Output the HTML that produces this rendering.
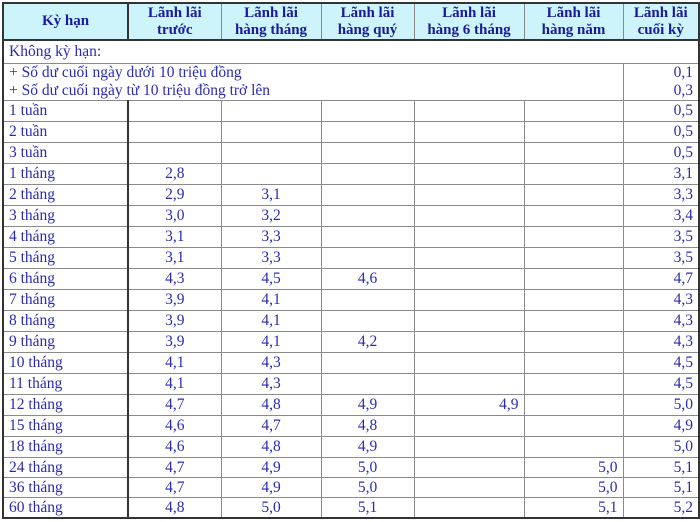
<!DOCTYPE html>
<html><head><meta charset="utf-8"><style>
body{margin:0;width:700px;height:522px;background:#fff;overflow:hidden}
table{position:absolute;left:2px;top:2px;border-collapse:collapse;table-layout:fixed;font-family:"Liberation Serif",serif;font-size:15.5px;color:#2b2bb0;border:2px solid #333}
td{border:1px solid #8a8a8a;padding:0 5px;height:20px;line-height:18px;white-space:nowrap;overflow:visible}
td:first-child{border-right:2px solid #333}
.h td{background:#cdf4fb;font-weight:bold;color:#1a1a9a;text-align:center;height:35px;line-height:17px;border-bottom:2px solid #333;font-size:15px}
.c{text-align:center}.r{text-align:right}
tr.s td{height:19px}
</style></head><body>
<table>
<colgroup><col style="width:125px"><col style="width:93px"><col style="width:100px"><col style="width:93px"><col style="width:110px"><col style="width:99px"><col style="width:76px"></colgroup>
<tr class="h"><td>Kỳ hạn</td><td>Lãnh lãi<br>trước</td><td>Lãnh lãi<br>hàng tháng</td><td>Lãnh lãi<br>hàng quý</td><td>Lãnh lãi<br>hàng 6 tháng</td><td>Lãnh lãi<br>hàng năm</td><td>Lãnh lãi<br>cuối kỳ</td></tr>
<tr><td colspan="7" style="height:22px;border-right:none">Không kỳ hạn:</td></tr>
<tr><td colspan="6" style="height:36px;border-right:1px solid #8a8a8a">+ Số dư cuối ngày dưới 10 triệu đồng<br>+ Số dư cuối ngày từ 10 triệu đồng trở lên</td><td class="r">0,1<br>0,3</td></tr>
<tr><td>1 tuần</td><td></td><td></td><td></td><td></td><td></td><td class="r">0,5</td></tr>
<tr><td>2 tuần</td><td></td><td></td><td></td><td></td><td></td><td class="r">0,5</td></tr>
<tr><td>3 tuần</td><td></td><td></td><td></td><td></td><td></td><td class="r">0,5</td></tr>
<tr><td>1 tháng</td><td class="c">2,8</td><td></td><td></td><td></td><td></td><td class="r">3,1</td></tr>
<tr><td>2 tháng</td><td class="c">2,9</td><td class="c">3,1</td><td></td><td></td><td></td><td class="r">3,3</td></tr>
<tr><td>3 tháng</td><td class="c">3,0</td><td class="c">3,2</td><td></td><td></td><td></td><td class="r">3,4</td></tr>
<tr><td>4 tháng</td><td class="c">3,1</td><td class="c">3,3</td><td></td><td></td><td></td><td class="r">3,5</td></tr>
<tr><td>5 tháng</td><td class="c">3,1</td><td class="c">3,3</td><td></td><td></td><td></td><td class="r">3,5</td></tr>
<tr><td>6 tháng</td><td class="c">4,3</td><td class="c">4,5</td><td class="c">4,6</td><td></td><td></td><td class="r">4,7</td></tr>
<tr><td>7 tháng</td><td class="c">3,9</td><td class="c">4,1</td><td></td><td></td><td></td><td class="r">4,3</td></tr>
<tr><td>8 tháng</td><td class="c">3,9</td><td class="c">4,1</td><td></td><td></td><td></td><td class="r">4,3</td></tr>
<tr><td>9 tháng</td><td class="c">3,9</td><td class="c">4,1</td><td class="c">4,2</td><td></td><td></td><td class="r">4,3</td></tr>
<tr><td>10 tháng</td><td class="c">4,1</td><td class="c">4,3</td><td></td><td></td><td></td><td class="r">4,5</td></tr>
<tr><td>11 tháng</td><td class="c">4,1</td><td class="c">4,3</td><td></td><td></td><td></td><td class="r">4,5</td></tr>
<tr><td>12 tháng</td><td class="c">4,7</td><td class="c">4,8</td><td class="c">4,9</td><td class="r">4,9</td><td></td><td class="r">5,0</td></tr>
<tr><td>15 tháng</td><td class="c">4,6</td><td class="c">4,7</td><td class="c">4,8</td><td></td><td></td><td class="r">4,9</td></tr>
<tr><td>18 tháng</td><td class="c">4,6</td><td class="c">4,8</td><td class="c">4,9</td><td></td><td></td><td class="r">5,0</td></tr>
<tr class="s"><td>24 tháng</td><td class="c">4,7</td><td class="c">4,9</td><td class="c">5,0</td><td></td><td class="r">5,0</td><td class="r">5,1</td></tr>
<tr class="s"><td>36 tháng</td><td class="c">4,7</td><td class="c">4,9</td><td class="c">5,0</td><td></td><td class="r">5,0</td><td class="r">5,1</td></tr>
<tr class="s"><td>60 tháng</td><td class="c">4,8</td><td class="c">5,0</td><td class="c">5,1</td><td></td><td class="r">5,1</td><td class="r">5,2</td></tr>
</table>
</body></html>
